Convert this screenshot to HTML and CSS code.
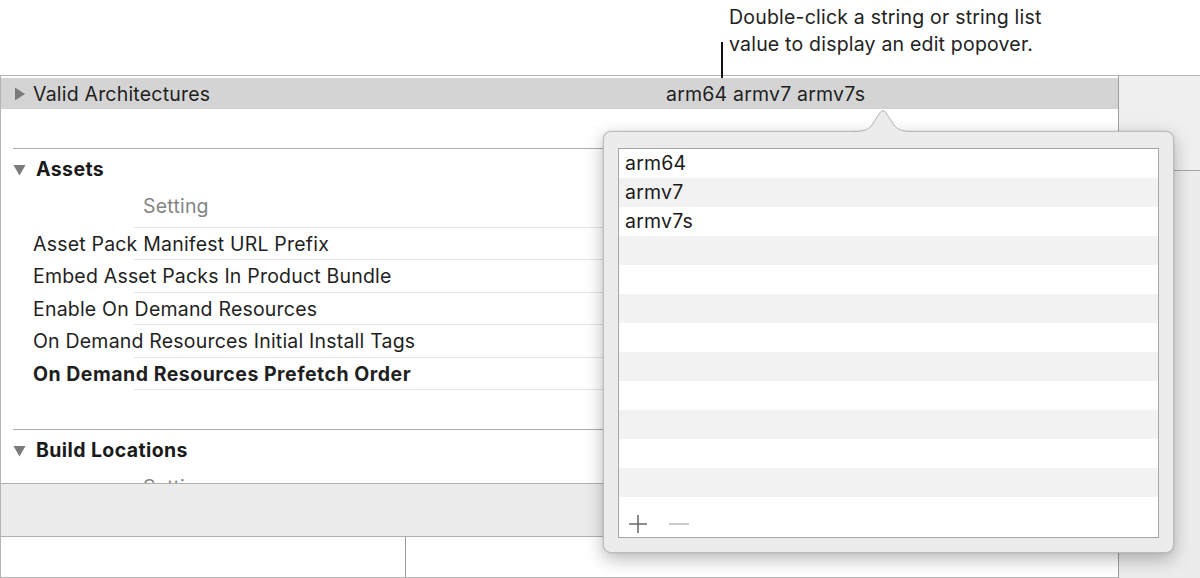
FILE: index.html
```html
<!DOCTYPE html>
<html>
<head>
<meta charset="utf-8">
<link rel="stylesheet" href="styles.css">
</head>
<body>
<div class="page">
  <div class="caption">
    <p class="caption-text">Double-click a string or string list<br>value to display an edit popover.</p>
  </div>
  <div class="callout-line"></div>

  <div class="window">
    <div class="main">
      <div class="content">
        <div class="va-row">
          <svg class="tri" width="12" height="14" viewBox="0 0 12 14"><path d="M1 0.5 L11 7 L1 13.5 Z" fill="#7b7b7b"/></svg>
          <span class="va-label">Valid Architectures</span>
          <span class="va-value">arm64 armv7 armv7s</span>
        </div>

        <div class="sep"></div>
        <div class="sec-head">
          <svg class="tri-down" width="13" height="12" viewBox="0 0 13 12"><path d="M0.5 1 L12.5 1 L6.5 11.5 Z" fill="#7b7b7b"/></svg>
          <span>Assets</span>
        </div>
        <div class="col-head">Setting</div>
        <div class="row">Asset Pack Manifest URL Prefix</div>
        <div class="row">Embed Asset Packs In Product Bundle</div>
        <div class="row">Enable On Demand Resources</div>
        <div class="row">On Demand Resources Initial Install Tags</div>
        <div class="row bold">On Demand Resources Prefetch Order</div>

        <div class="sep sep-2"></div>
        <div class="sec-head">
          <svg class="tri-down" width="13" height="12" viewBox="0 0 13 12"><path d="M0.5 1 L12.5 1 L6.5 11.5 Z" fill="#7b7b7b"/></svg>
          <span>Build Locations</span>
        </div>
        <div class="col-head">Setting</div>
      </div>
      <div class="bottom-bar"></div>
      <div class="bottom-split">
        <div class="split-left"></div>
        <div class="split-right"></div>
      </div>
    </div>
    <div class="side">
      <div class="side-top"></div>
      <div class="side-rest"></div>
    </div>
  </div>

  <div class="popover">
    <div class="list-box">
      <div class="list">
        <div class="item">arm64</div>
        <div class="item">armv7</div>
        <div class="item">armv7s</div>
      </div>
      <div class="list-tools">
        <svg class="plus" width="18" height="18" viewBox="0 0 18 18"><path d="M9 0 V18 M0 9 H18" stroke="#6a6a6a" stroke-width="1.6"/></svg>
        <svg class="minus" width="20" height="4" viewBox="0 0 20 4"><path d="M0 2 H20" stroke="#bdbdbd" stroke-width="1.6"/></svg>
      </div>
    </div>
  </div>
  <svg class="arrow" width="60" height="24" viewBox="0 0 60 24">
    <path d="M0 23.5 C10 23.5 15 22.5 19 17 L27.5 4 Q30 1 32.5 4 L41 17 C45 22.5 50 23.5 60 23.5 L60 24 L0 24 Z" fill="#ececec"/>
    <path d="M0 23.5 C10 23.5 15 22.5 19 17 L27.5 4 Q30 1 32.5 4 L41 17 C45 22.5 50 23.5 60 23.5" fill="none" stroke="#b4b4b4" stroke-width="1"/>
  </svg>
</div>
</body>
</html>
```

FILE: styles.css
```css
* { box-sizing: border-box; }
html, body { margin: 0; padding: 0; background: #fff; }
body {
  font-family: Inter, "Liberation Sans", Arial, sans-serif;
  color: #1f1f1f;
  font-size: 19.5px;
  letter-spacing: 0.2px;
}
.page {
  position: relative;
  width: 1200px;
  height: 578px;
  overflow: hidden;
}
.caption {
  height: 75px;
  padding: 4px 0 0 729px;
}
.caption-text {
  margin: 0;
  font-size: 19.5px;
  line-height: 27px;
  color: #222;
}
.callout-line {
  position: absolute;
  left: 721px;
  top: 42px;
  width: 2px;
  height: 36px;
  background: #111;
}
.window {
  display: flex;
  height: 503px;
  border-top: 1px solid #b5b5b5;
}
.main {
  width: 1119px;
  border-left: 1px solid #b5b5b5;
  border-right: 1px solid #9e9e9e;
  display: flex;
  flex-direction: column;
}
.content {
  height: 407px;
  overflow: hidden;
}
.va-row {
  margin-top: 2px;
  height: 31px;
  background: #d4d4d4;
  display: flex;
  align-items: center;
  padding-left: 13px;
}
.tri { margin-right: 7px; }
.va-label { width: 633px; }
.va-value { white-space: nowrap; }
.sep {
  height: 1px;
  background: #adadad;
  margin: 39px 0 0 12px;
}
.sep-2 { margin-top: 39px; }
.sec-head {
  height: 40px;
  display: flex;
  align-items: center;
  padding-left: 12px;
  font-weight: bold;
  letter-spacing: 0.4px;
  color: #1a1a1a;
}
.tri-down { margin-right: 10px; margin-top: 1px; }
.col-head {
  height: 38.5px;
  line-height: 34px;
  padding-left: 142px;
  color: #858585;
  background: linear-gradient(#e3e3e3, #e3e3e3) no-repeat 133px 100% / calc(100% - 133px) 1px;
}
.row {
  height: 32.5px;
  line-height: 32px;
  padding-left: 32px;
  white-space: nowrap;
  background: linear-gradient(#e3e3e3, #e3e3e3) no-repeat 133px 100% / calc(100% - 133px) 1px;
}
.row.bold { font-weight: bold; letter-spacing: 0.5px; }
.bottom-bar {
  height: 54px;
  background: #ececec;
  border-top: 1px solid #b0b0b0;
  border-bottom: 1px solid #b0b0b0;
}
.bottom-split {
  flex: 1;
  display: flex;
  border-bottom: 1px solid #b5b5b5;
}
.split-left {
  width: 405px;
  border-right: 1px solid #9a9a9a;
}
.split-right { flex: 1; }
.side {
  flex: 1;
  background: #efefef;
  display: flex;
  flex-direction: column;
}
.side-top {
  height: 95px;
  border-bottom: 1px solid #a8a8a8;
}
.side-rest { flex: 1; background: #ececec; }

.popover {
  position: absolute;
  left: 603px;
  top: 131px;
  width: 571px;
  height: 422px;
  background: #ececec;
  border: 1px solid #bcbcbc;
  border-radius: 8px;
  box-shadow: 0 6px 18px rgba(0,0,0,0.28), 0 0 2px rgba(0,0,0,0.15);
  padding: 16px 14px 14px 14px;
}
.list-box {
  height: 390px;
  border: 1px solid #a6a6a6;
  background: #fff;
  display: flex;
  flex-direction: column;
}
.list {
  height: 359px;
  background: repeating-linear-gradient(#ffffff 0 29px, #f2f2f2 29px 58px);
}
.item {
  height: 29px;
  line-height: 29px;
  padding-left: 6px;
  color: #1a1a1a;
}
.list-tools {
  flex: 1;
  display: flex;
  align-items: center;
  padding-left: 10px;
  gap: 22px;
}
.plus { margin-top: 2px; }
.minus { margin-top: 2px; }
.arrow {
  position: absolute;
  left: 853px;
  top: 108px;
}
```
